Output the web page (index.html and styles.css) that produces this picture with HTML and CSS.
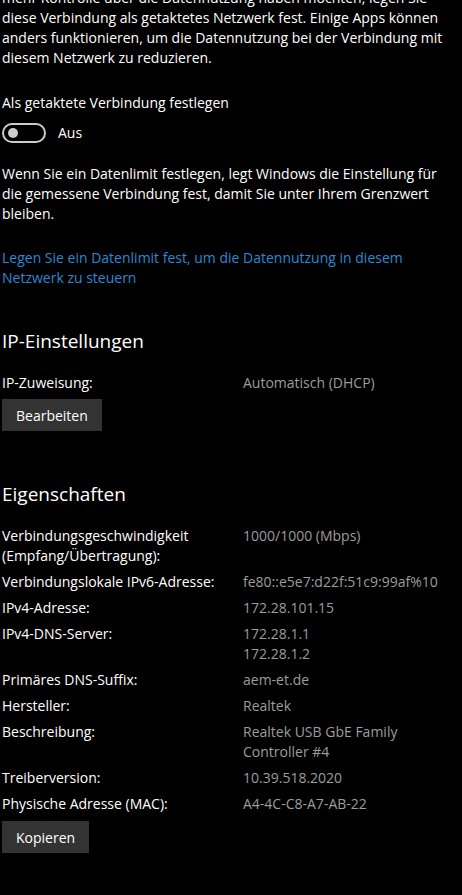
FILE: index.html
```html
<!DOCTYPE html>
<html lang="de">
<head>
<meta charset="utf-8">
<link rel="stylesheet" href="styles.css">
</head>
<body>
<main class="page">
  <p class="text intro">mehr Kontrolle über die Datennutzung haben möchten, legen Sie diese Verbindung als getaktetes Netzwerk fest. Einige Apps können anders funktionieren, um die Datennutzung bei der Verbindung mit diesem Netzwerk zu reduzieren.</p>
  <div class="text label">Als getaktete Verbindung festlegen</div>
  <div class="toggle-row">
    <span class="toggle"><span class="knob"></span></span>
    <span class="text">Aus</span>
  </div>
  <p class="text note">Wenn Sie ein Datenlimit festlegen, legt Windows die Einstellung für die gemessene Verbindung fest, damit Sie unter Ihrem Grenzwert bleiben.</p>
  <a class="text link" href="#">Legen Sie ein Datenlimit fest, um die Datennutzung in diesem Netzwerk zu steuern</a>

  <h2 class="heading h-ip">IP-Einstellungen</h2>
  <div class="row first">
    <span class="key">IP-Zuweisung:</span>
    <span class="val">Automatisch (DHCP)</span>
  </div>
  <button class="btn">Bearbeiten</button>

  <h2 class="heading h-props">Eigenschaften</h2>
  <div class="row first">
    <span class="key">Verbindungsgeschwindigkeit (Empfang/Übertragung):</span>
    <span class="val">1000/1000 (Mbps)</span>
  </div>
  <div class="row">
    <span class="key">Verbindungslokale IPv6-Adresse:</span>
    <span class="val">fe80::e5e7:d22f:51c9:99af%10</span>
  </div>
  <div class="row">
    <span class="key">IPv4-Adresse:</span>
    <span class="val">172.28.101.15</span>
  </div>
  <div class="row">
    <span class="key">IPv4-DNS-Server:</span>
    <span class="val">172.28.1.1<br>172.28.1.2</span>
  </div>
  <div class="row">
    <span class="key">Primäres DNS-Suffix:</span>
    <span class="val">aem-et.de</span>
  </div>
  <div class="row">
    <span class="key">Hersteller:</span>
    <span class="val">Realtek</span>
  </div>
  <div class="row">
    <span class="key">Beschreibung:</span>
    <span class="val">Realtek USB GbE Family Controller #4</span>
  </div>
  <div class="row">
    <span class="key">Treiberversion:</span>
    <span class="val">10.39.518.2020</span>
  </div>
  <div class="row">
    <span class="key">Physische Adresse (MAC):</span>
    <span class="val">A4-4C-C8-A7-AB-22</span>
  </div>
  <button class="btn btn-copy">Kopieren</button>
</main>
</body>
</html>
```

FILE: styles.css
```css
html, body {
  margin: 0;
  padding: 0;
  background: #000;
  overflow: hidden;
}
body {
  font-family: "Open Sans", "Noto Sans", sans-serif;
  font-size: 14px;
  line-height: 20px;
  color: #fff;
}
.page {
  padding: 0 2px;
  width: 446px;
}
.text {
  margin: 0;
  display: block;
}
.intro {
  margin-top: -12px;
}
.label {
  margin-top: 25px;
}
.toggle-row {
  display: flex;
  align-items: center;
  gap: 12px;
  margin-top: 10px;
  height: 20px;
}
.toggle {
  box-sizing: border-box;
  width: 44px;
  height: 20px;
  border: 2px solid #cccccc;
  border-radius: 10px;
  display: flex;
  align-items: center;
  padding-left: 4px;
}
.knob {
  width: 10px;
  height: 10px;
  border-radius: 50%;
  background: #cccccc;
}
.note {
  margin-top: 21px;
}
.link {
  margin-top: 24px;
  color: #2a8ad6;
  text-decoration: none;
}
.heading {
  margin: 0;
  font-weight: normal;
  font-size: 19px;
  line-height: 28px;
}
.h-ip {
  margin-top: 39px;
}
.h-props {
  margin-top: 49px;
}
.row {
  display: grid;
  grid-template-columns: 241px 1fr;
  margin-top: 6px;
}
.row.first {
  margin-top: 18px;
}
.key {
  color: #fff;
}
.val {
  color: #9d9d9d;
  padding-right: 10px;
}
.btn {
  display: block;
  margin-top: 6px;
  height: 32px;
  padding: 0 14px;
  background: #333333;
  border: none;
  color: #fff;
  font-family: inherit;
  font-size: 14px;
}
.btn-copy {
  margin-top: 7px;
}
```
